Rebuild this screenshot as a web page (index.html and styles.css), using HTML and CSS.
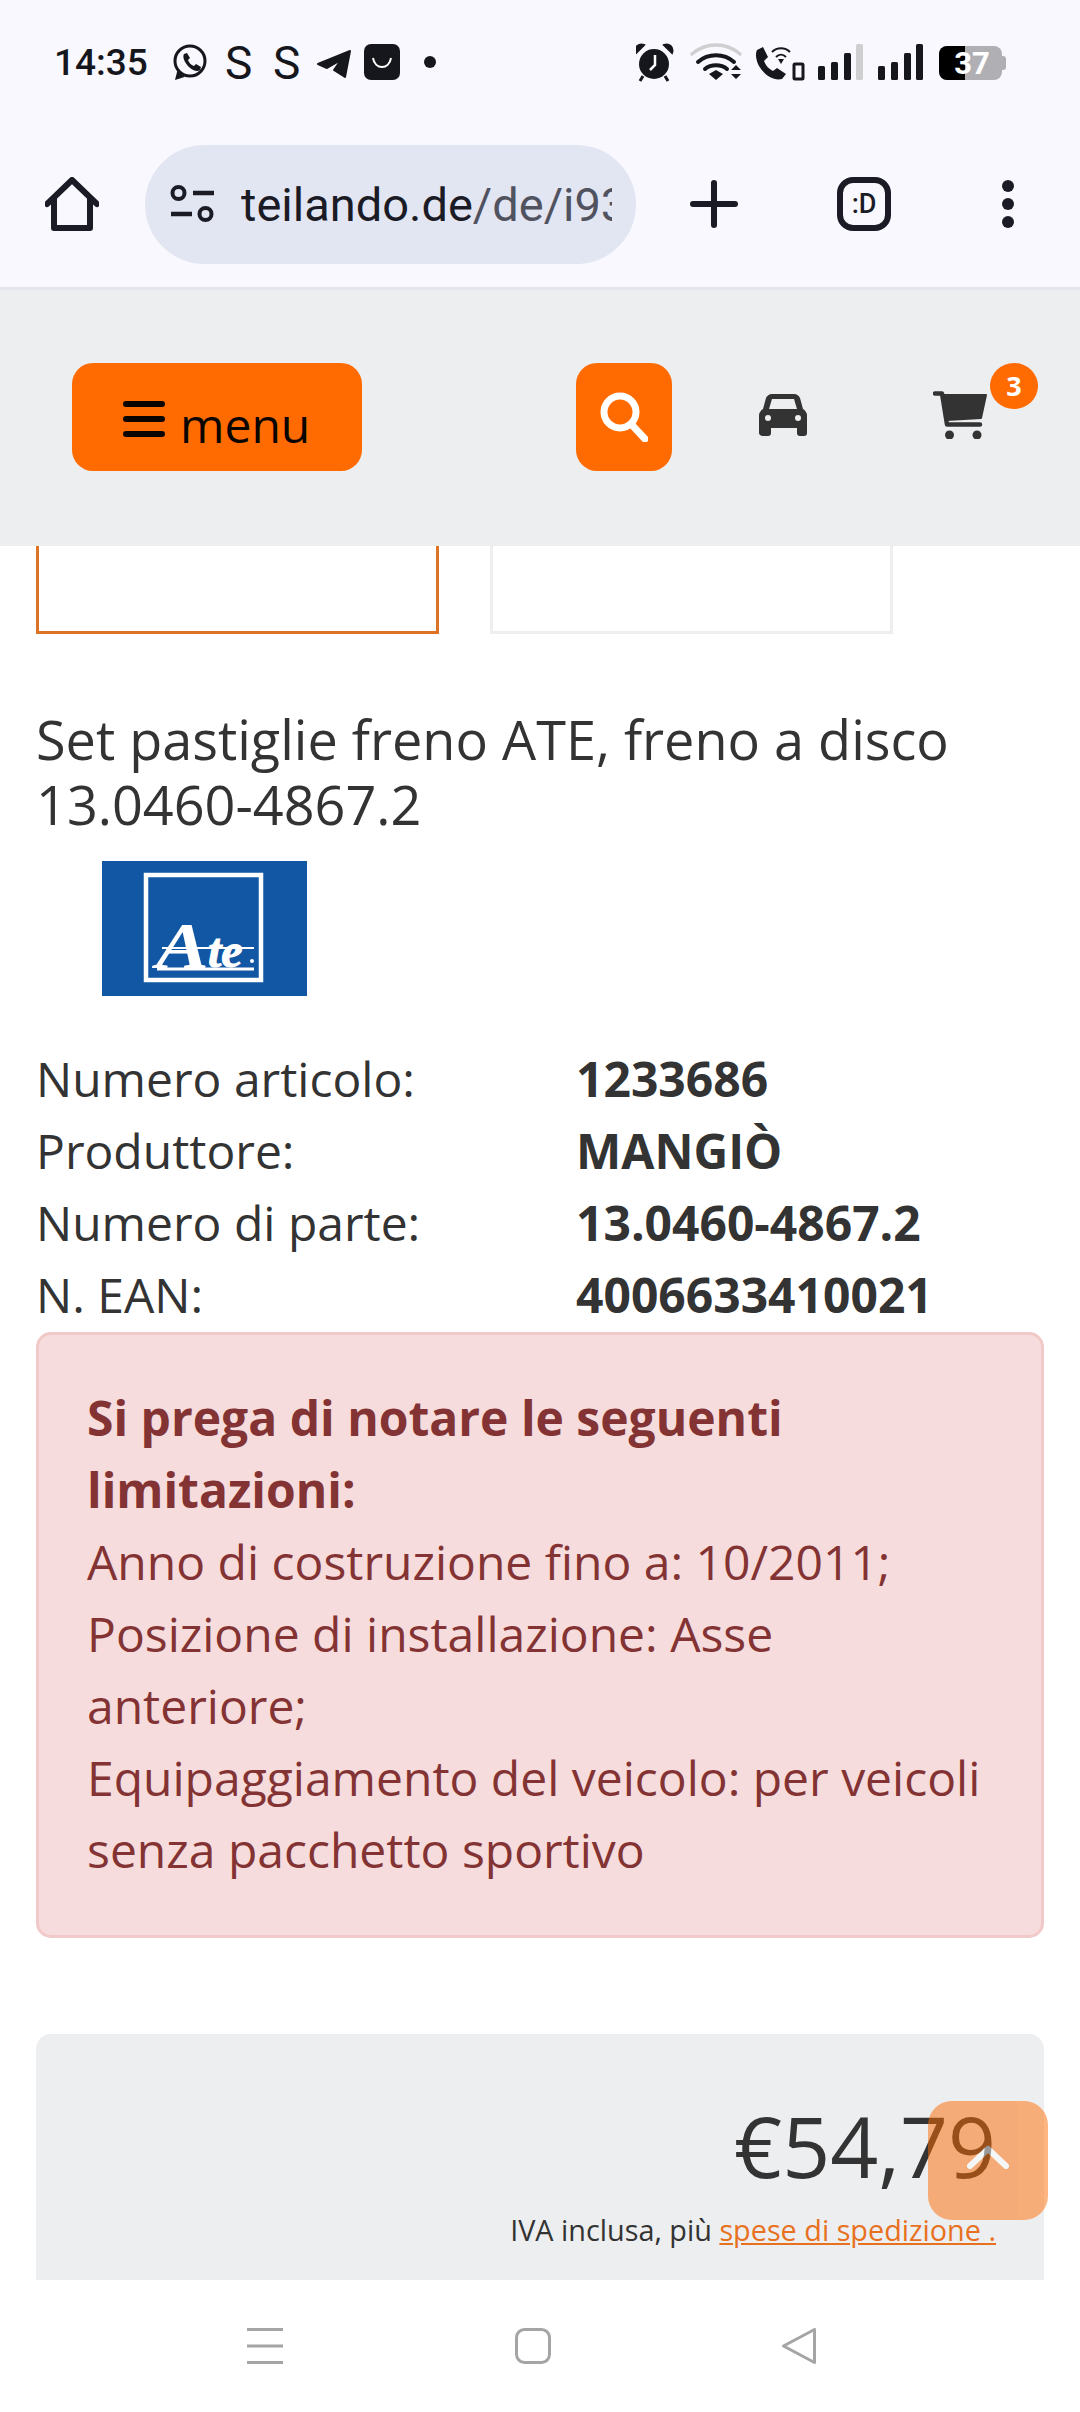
FILE: index.html
```html
<!DOCTYPE html>
<html lang="it">
	<head>
		<meta charset="utf-8">
		<meta name="viewport" content="initial-scale=1, user-scalable=no">
		<title>Set pastiglie freno ATE</title>
		<link rel="stylesheet" href="styles.css">
	</head>
	<body>
		<div class="phone">
			<div class="status">
				<span class="time">14:35</span>
				<svg class="status-left" viewBox="173 24 263 76" width="263" height="76">
					<circle cx="190" cy="61" r="15" fill="none" stroke="#16171c" stroke-width="3"/>
					<path d="M175 80l2.500-10 7 7z" fill="#16171c"/>
					<path d="M184 54l3-1 3 5-2 2c1 3 3 5 6 6l2-2 5 3-1 3c-2 2-7 1-11-3s-7-10-5-13z" fill="#16171c"/>
					<text class="status-s" x="225" y="79">S</text>
					<text class="status-s" x="273" y="79">S</text>
					<path d="M318 64l32-13-5 26-11-7 7-10-14 8z" fill="#16171c" stroke="#16171c" stroke-width="2" stroke-linejoin="round"/>
					<rect x="364" y="44" width="36" height="36" rx="7" fill="#16171c"/>
					<path d="M373 58c2 12 16 12 18 0" fill="none" stroke="#fff" stroke-width="2"/>
					<circle cx="430" cy="62" r="6" fill="#16171c"/>
				</svg>
				<svg class="status-right" viewBox="636 24 370 76" width="370" height="76">
					<circle cx="654" cy="64" r="15" fill="#16171c"/>
					<path d="M636 53c-2-6 3-10 8-8zM672 53c2-6-3-10-8-8z" fill="#16171c" stroke="#16171c" stroke-width="2"/>
					<path d="M643 76l-3 5M665 76l3 5" stroke="#16171c" stroke-width="3"/>
					<path d="M655 55v10l-5 5" fill="none" stroke="#fff" stroke-width="2.500"/>
					<path d="M692 54c14-12 34-12 48 0" fill="none" stroke="#cfcfd2" stroke-width="3.500" stroke-linecap="round"/>
					<path d="M698 62c10-9 26-9 36 0" fill="none" stroke="#16171c" stroke-width="4" stroke-linecap="round"/>
					<path d="M705 69c6-5 16-5 22 0" fill="none" stroke="#16171c" stroke-width="4" stroke-linecap="round"/>
					<path d="M709 74l7-4 7 4-7 6z" fill="#16171c"/>
					<path d="M731 70l5-5 5 5zM731 74l5 5 5-5z" fill="#16171c"/>
					<path d="M757 50l6-3 5 10-4 4c2 5 5 8 9 10l4-3 9 6-4 5c-8 2-17-3-23-13-3-6-4-12-2-16z" fill="#16171c"/>
					<path d="M772 52c5-5 13-5 18 0M776 57c3-3 7-3 10 0" fill="none" stroke="#16171c" stroke-width="2"/>
					<path d="M778 59h6l-3 5z" fill="#16171c"/>
					<rect x="794" y="64" width="9" height="15" rx="1" fill="none" stroke="#16171c" stroke-width="3"/>
					<rect x="818" y="66" width="7" height="14" rx="1.500" fill="#16171c"/>
					<rect x="831" y="62" width="7" height="18" rx="1.500" fill="#16171c"/>
					<rect x="844" y="53" width="7" height="27" rx="1.500" fill="#16171c"/>
					<rect x="856" y="44" width="7" height="36" rx="1.500" fill="#cfcfd2"/>
					<rect x="878" y="66" width="7" height="14" rx="1.500" fill="#16171c"/>
					<rect x="891" y="62" width="7" height="18" rx="1.500" fill="#16171c"/>
					<rect x="904" y="53" width="7" height="27" rx="1.500" fill="#16171c"/>
					<rect x="916" y="44" width="7" height="36" rx="1.500" fill="#16171c"/>
					<rect x="939" y="46" width="63" height="34" rx="8" fill="#b0afb3"/>
					<path d="M1002 56h1a3 3 0 0 1 3 3v8a3 3 0 0 1-3 3h-1z" fill="#b0afb3"/>
					<path d="M965 46h-18a8 8 0 0 0-8 8v18a8 8 0 0 0 8 8h18z" fill="#000"/>
					<text class="status-batt" x="972" y="74">37</text>
				</svg>
			</div>

			<div class="toolbar">
				<svg class="home" viewBox="0 0 54 54" width="54" height="54">
					<path d="M2 27L27 3l25 24M9 21v30h36V21" fill="none" stroke="#1a1b25" stroke-width="6" stroke-linecap="round" stroke-linejoin="round"/>
				</svg>
				<div class="urlbar">
					<svg class="tune" viewBox="0 0 44 38" width="44" height="38">
						<circle cx="8.500" cy="8" r="6" fill="none" stroke="#1a1b25" stroke-width="4"/>
						<circle cx="35.500" cy="29" r="6" fill="none" stroke="#1a1b25" stroke-width="4"/>
						<path d="M23 8h21M1 29h21" stroke="#1a1b25" stroke-width="4.500"/>
					</svg>
					<div class="url"><b>teilando.de</b>/de/i93</div>
				</div>
				<svg class="plus" viewBox="0 0 48 48" width="48" height="48">
					<path d="M24 3v42M3 24h42" stroke="#1a1b25" stroke-width="6" stroke-linecap="round"/>
				</svg>
				<div class="tabs">:D</div>
				<svg class="dots" viewBox="0 0 12 48" width="12" height="48">
					<circle cx="6" cy="6" r="6" fill="#1a1b25"/>
					<circle cx="6" cy="24" r="6" fill="#1a1b25"/>
					<circle cx="6" cy="42" r="6" fill="#1a1b25"/>
				</svg>
			</div>

			<div class="header">
				<div class="menu-btn">
					<svg viewBox="0 0 42 36" width="42" height="36">
						<path d="M3 3h36M3 18h36M3 33h36" stroke="#0a0500" stroke-width="6" stroke-linecap="round"/>
					</svg>
					<span>menu</span>
				</div>
				<div class="search-btn">
					<svg viewBox="0 0 48 50" width="48" height="50">
						<circle cx="20" cy="20" r="16" fill="none" stroke="#fff" stroke-width="7"/>
						<path d="M32 33l13 14" stroke="#fff" stroke-width="7" stroke-linecap="round"/>
					</svg>
				</div>
				<svg class="car" viewBox="0 0 48 42" width="48" height="42">
					<path d="M13 0h22c3 0 5 2 6 4l3 11c2 1 4 4 4 6v18c0 2-1 3-3 3h-4c-2 0-3-1-3-3v-5H12v5c0 2-1 3-3 3H4c-2 0-4-1-4-3V21c0-2 2-5 4-6L7 4c1-2 3-4 6-4z" fill="#333"/>
					<path d="M13 5h22l3 10H10z" fill="#eceef0"/>
					<circle cx="9" cy="24" r="3" fill="#eceef0"/>
					<circle cx="39" cy="24" r="3" fill="#eceef0"/>
				</svg>
				<div class="cart">
					<svg viewBox="0 0 54 48" width="54" height="48">
						<path d="M2 2.500h7l5 31h33" fill="none" stroke="#333" stroke-width="4.500" stroke-linecap="round" stroke-linejoin="round"/>
						<path d="M10 4h43l-5 23-34 2z" fill="#333" stroke="#333" stroke-width="2" stroke-linejoin="round"/>
						<circle cx="16.500" cy="44" r="4.500" fill="#333"/>
						<circle cx="44" cy="44" r="4.500" fill="#333"/>
					</svg>
					<span class="badge">3</span>
				</div>
			</div>

			<div class="content">
				<div class="thumbs">
					<div class="thumb thumb-active"></div>
					<div class="thumb"></div>
				</div>

				<h1 class="title">Set pastiglie freno ATE, freno a disco 13.0460-4867.2</h1>

				<svg class="brand" viewBox="0 0 205 135" width="205" height="135">
					<rect width="205" height="135" fill="#1257a3"/>
					<rect x="44" y="14" width="115" height="105" fill="none" stroke="#fff" stroke-width="4.500"/>
					<text class="brand-a" transform="translate(54 107) scale(1.2 1)">A</text>
					<text class="brand-te" x="106" y="106">te</text>
					<path d="M60 87h92" stroke="#fff" stroke-width="2"/>
					<path d="M55 108h97" stroke="#fff" stroke-width="3"/>
					<circle cx="150" cy="100" r="2" fill="#fff"/>
				</svg>

				<div class="specs">
					<div class="spec"><span>Numero articolo:</span><b>1233686</b></div>
					<div class="spec"><span>Produttore:</span><b>MANGIÒ</b></div>
					<div class="spec"><span>Numero di parte:</span><b>13.0460-4867.2</b></div>
					<div class="spec"><span>N. EAN:</span><b>4006633410021</b></div>
				</div>

				<div class="alert">
					<b>Si prega di notare le seguenti limitazioni:</b><br>
					Anno di costruzione fino a: 10/2011;<br>
					Posizione di installazione: Asse anteriore;<br>
					Equipaggiamento del veicolo: per veicoli senza pacchetto sportivo
				</div>

				<div class="price-card">
					<div class="price">€54,79</div>
					<div class="tax">IVA inclusa, più <a href="#">spese di spedizione .</a></div>
				</div>
			</div>

			<div class="navbar">
				<svg viewBox="0 0 36 36" width="36" height="36">
					<path d="M0 1.500h36M0 18h36M0 34.500h36" stroke="#a5a5a5" stroke-width="3"/>
				</svg>
				<svg viewBox="0 0 36 36" width="36" height="36">
					<rect x="1.500" y="1.500" width="33" height="33" rx="8" fill="none" stroke="#a5a5a5" stroke-width="3"/>
				</svg>
				<svg class="nav-back" viewBox="0 0 34 36" width="34" height="36">
					<path d="M1.500 18L32.500 1.500v33z" fill="none" stroke="#a5a5a5" stroke-width="3" stroke-linejoin="round"/>
				</svg>
			</div>

			<div class="to-top">
				<svg viewBox="0 0 42 24" width="42" height="24">
					<path d="M3 21L21 4l18 17" fill="none" stroke="#fff" stroke-width="6" stroke-linecap="round" stroke-linejoin="round"/>
				</svg>
			</div>
		</div>
	</body>
</html>
```

FILE: styles.css
```css
body {
	margin: 0;
	font-family: "Open Sans", sans-serif;
	color: #333;
	background: #fff;
}
b {
	font-weight: 700;
}

.phone {
	position: relative;
	display: flex;
	flex-direction: column;
	width: 1080px;
	height: 2412px;
	overflow: hidden;
}

/* android status bar */
.status {
	display: flex;
	align-items: center;
	flex: none;
	height: 124px;
	padding-left: 54px;
	box-sizing: border-box;
	background: #f8f8fe;
}
.time {
	width: 119px;
	font-family: Roboto, sans-serif;
	font-size: 37px;
	font-weight: 500;
	color: #16171c;
}
.status-right {
	margin-left: 200px;
}
.status-s {
	font-family: Roboto, sans-serif;
	font-size: 46px;
	fill: #16171c;
}
.status-batt {
	font-family: Roboto, sans-serif;
	font-size: 31px;
	font-weight: 700;
	fill: #fff;
	text-anchor: middle;
}

/* browser toolbar */
.toolbar {
	display: flex;
	align-items: center;
	flex: none;
	height: 166px;
	padding: 0 0 3px 45px;
	box-sizing: border-box;
	background: #f8f8fe;
	border-bottom: 3px solid #e3e5ec;
}
.urlbar {
	display: flex;
	align-items: center;
	width: 491px;
	height: 119px;
	margin-left: 46px;
	padding: 0 24px 0 25px;
	box-sizing: border-box;
	border-radius: 60px;
	background: #e2e5f2;
}
.tune {
	flex: none;
}
.url {
	margin-left: 27px;
	overflow: hidden;
	white-space: nowrap;
	font-family: Roboto, sans-serif;
	font-size: 47px;
	color: #50535f;
}
.url b {
	font-weight: 400;
	color: #1a1b25;
}
.plus {
	margin-left: 54px;
}
.tabs {
	display: flex;
	align-items: center;
	justify-content: center;
	width: 54px;
	height: 54px;
	margin-left: 99px;
	box-sizing: border-box;
	border: 6px solid #1a1b25;
	border-radius: 16px;
	font-family: Roboto, sans-serif;
	font-size: 27px;
	font-weight: 500;
	color: #1a1b25;
}
.dots {
	margin-left: 111px;
}

/* shop header */
.header {
	display: flex;
	align-items: flex-start;
	flex: none;
	height: 256px;
	padding: 73px 0 0 72px;
	box-sizing: border-box;
	background: #eceef0;
}
.menu-btn {
	display: flex;
	align-items: flex-end;
	width: 290px;
	height: 108px;
	padding: 0 0 16px 51px;
	box-sizing: border-box;
	border-radius: 21px;
	background: #ff6b00;
	font-size: 48px;
	line-height: 60px;
	color: #0a0500;
}
.menu-btn svg {
	margin: 0 15px 18px 0;
}
.search-btn {
	display: flex;
	align-items: center;
	justify-content: center;
	width: 96px;
	height: 108px;
	margin-left: 214px;
	border-radius: 21px;
	background: #ff6b00;
}
.car {
	margin: 31px 0 0 87px;
}
.cart {
	position: relative;
	margin: 28px 0 0 126px;
}
.badge {
	position: absolute;
	left: 57px;
	top: -28px;
	width: 48px;
	height: 46px;
	border-radius: 50%;
	background: #ff6b00;
	font-size: 27px;
	font-weight: 700;
	line-height: 46px;
	text-align: center;
	color: #fff;
}

/* product */
.content {
	flex: 1;
	min-height: 0;
	padding: 0 36px;
	overflow: hidden;
}
.thumbs {
	display: flex;
	gap: 51px;
}
.thumb {
	width: 403px;
	height: 88px;
	box-sizing: border-box;
	border: 3px solid #eee;
	border-top: 0;
}
.thumb-active {
	border-color: #dc7325;
}
.title {
	margin: 73px 0 0;
	font-size: 54px;
	font-weight: 400;
	line-height: 65px;
}
.brand {
	display: block;
	margin: 24px 0 47px 66px;
}
.brand-a {
	font-family: "Liberation Serif", serif;
	font-size: 66px;
	font-style: italic;
	font-weight: 700;
	fill: #fff;
}
.brand-te {
	font-family: "Liberation Serif", serif;
	font-size: 48px;
	font-style: italic;
	font-weight: 700;
	fill: #fff;
	stroke: #fff;
	stroke-width: 1;
}
.spec {
	display: flex;
	font-size: 48px;
	line-height: 72px;
}
.spec span {
	width: 540px;
}
.alert {
	margin-top: 1px;
	padding: 47px 48px 49px;
	border: 3px solid #f2c9c9;
	border-radius: 15px;
	background: #f6dcdc;
	font-size: 48px;
	line-height: 72px;
	color: #833333;
}
.price-card {
	height: 300px;
	margin-top: 96px;
	padding: 49px 48px 0 0;
	box-sizing: border-box;
	border-radius: 15px;
	background: #eceef0;
	text-align: right;
}
.price {
	font-size: 84px;
	line-height: 126px;
}
.tax {
	font-size: 28.8px;
	line-height: 42px;
}
.tax a {
	color: #e8711f;
}

/* android nav buttons */
.navbar {
	display: flex;
	flex: none;
	gap: 232px;
	height: 132px;
	padding: 48px 0 0 247px;
	box-sizing: border-box;
	background: #fff;
}
.nav-back {
	margin-left: -1px;
}

.to-top {
	position: absolute;
	left: 928px;
	top: 2101px;
	display: flex;
	justify-content: center;
	width: 120px;
	height: 119px;
	padding-top: 44px;
	box-sizing: border-box;
	border-radius: 24px;
	background: #ff6b00;
	opacity: 0.5;
}
.to-top svg {
	display: block;
}
```
